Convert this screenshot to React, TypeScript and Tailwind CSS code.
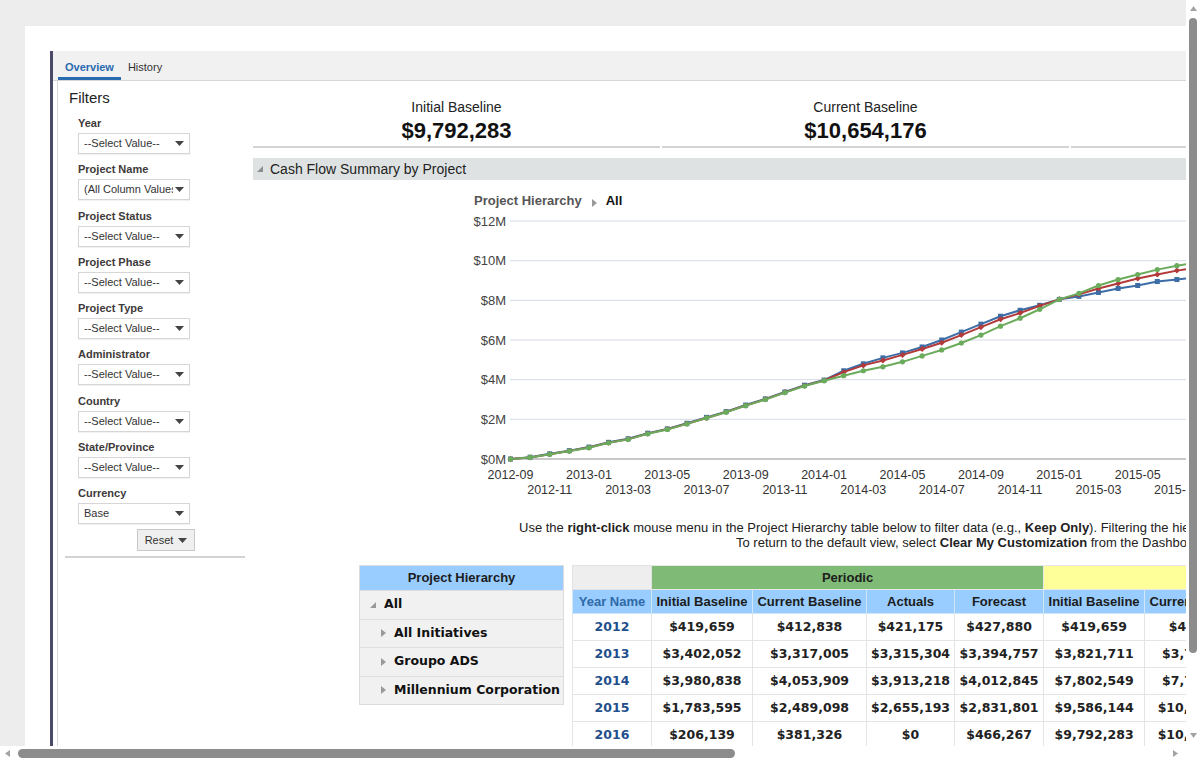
import React from "react";

const filters = [
  { label: "Year", value: "--Select Value--" },
  { label: "Project Name", value: "(All Column Values)" },
  { label: "Project Status", value: "--Select Value--" },
  { label: "Project Phase", value: "--Select Value--" },
  { label: "Project Type", value: "--Select Value--" },
  { label: "Administrator", value: "--Select Value--" },
  { label: "Country", value: "--Select Value--" },
  { label: "State/Province", value: "--Select Value--" },
  { label: "Currency", value: "Base" },
];

// cumulative cash flow in $M, one point per month from 2012-09
const series = [
  {
    color: "#3c6da6",
    marker: "square",
    values: [0, 0.09, 0.26, 0.42, 0.6, 0.84, 1.02, 1.3, 1.52, 1.8, 2.1, 2.39, 2.72, 3.03, 3.38, 3.72, 3.98, 4.45, 4.8, 5.1, 5.35, 5.65, 6.0, 6.4, 6.8, 7.2, 7.5, 7.75, 8.05, 8.2, 8.4, 8.6, 8.75, 8.95, 9.05, 9.15],
  },
  {
    color: "#b33a3a",
    marker: "diamond",
    values: [0, 0.08, 0.24, 0.4, 0.58, 0.82, 1.0, 1.28, 1.5, 1.78, 2.07, 2.37, 2.7, 3.01, 3.36, 3.7, 3.96, 4.38, 4.72, 4.97, 5.25, 5.55, 5.86, 6.25, 6.65, 7.05, 7.36, 7.72, 8.05, 8.3, 8.6, 8.85, 9.1, 9.3, 9.5, 9.65],
  },
  {
    color: "#6bab5c",
    marker: "circle",
    values: [0, 0.08, 0.24, 0.4, 0.57, 0.82, 0.99, 1.27, 1.49, 1.77, 2.07, 2.36, 2.69, 3.0, 3.35, 3.68, 3.95, 4.2, 4.45, 4.65, 4.9, 5.2, 5.5, 5.85, 6.25, 6.7, 7.1, 7.55, 8.05, 8.35, 8.75, 9.05, 9.3, 9.55, 9.75, 9.9],
  },
];

const rows = [
  { year: "2012", cells: ["$419,659", "$412,838", "$421,175", "$427,880", "$419,659", "$412,838", "$421,175", "$427,880"] },
  { year: "2013", cells: ["$3,402,052", "$3,317,005", "$3,315,304", "$3,394,757", "$3,821,711", "$3,729,843", "$3,736,479", "$3,822,637"] },
  { year: "2014", cells: ["$3,980,838", "$4,053,909", "$3,913,218", "$4,012,845", "$7,802,549", "$7,783,752", "$7,649,697", "$7,835,482"] },
  { year: "2015", cells: ["$1,783,595", "$2,489,098", "$2,655,193", "$2,831,801", "$9,586,144", "$10,272,850", "$10,304,890", "$10,667,283"] },
  { year: "2016", cells: ["$206,139", "$381,326", "$0", "$466,267", "$9,792,283", "$10,654,176", "$10,304,890", "$11,133,550"] },
];

const colWidths = [79, 101, 114, 88, 89, 101, 114, 88, 89];

const X0 = 257.5;
const STEP = 19.6;
const Y0 = 250;
const PER_M = 19.83;

function monthLabel(i: number) {
  const m = 8 + i;
  const year = 2012 + Math.floor(m / 12);
  const mon = (m % 12) + 1;
  return `${year}-${mon < 10 ? "0" + mon : mon}`;
}

function Arrow({ className = "" }: { className?: string }) {
  return (
    <svg width="9" height="5" viewBox="0 0 9 5" className={className}>
      <polygon points="0,0 9,0 4.5,5" fill="#444" />
    </svg>
  );
}

function SelectBox({ value }: { value: string }) {
  return (
    <div className="mt-[3px] w-[112px] h-[21px] border border-[#d6d6d6] bg-white shadow-[0_1px_1px_rgba(0,0,0,0.05)] flex items-center pl-[5px] pr-[5px] gap-[2px]">
      <span className="flex-1 overflow-hidden whitespace-nowrap text-[11px] text-[#333] leading-[13px]">
        {value}
      </span>
      <Arrow className="shrink-0" />
    </div>
  );
}

function CashFlowChart() {
  const ticks = [0, 2, 4, 6, 8, 10, 12];
  return (
    <svg width="1000" height="292" className="block font-['Liberation_Sans',Arial,sans-serif]">
      {ticks.map((t) => {
        const y = Y0 - t * PER_M;
        return (
          <g key={t}>
            <line
              x1="257"
              x2="1000"
              y1={y}
              y2={y}
              stroke={t === 0 ? "#c9c9c9" : "#d5dae3"}
              strokeWidth={t === 0 ? 2 : 1}
            />
            <text x="253" y={y + 4.5} textAnchor="end" fontSize="13" fill="#444">
              ${t}M
            </text>
          </g>
        );
      })}

      {Array.from({ length: 9 }, (_, k) => {
        const i = k * 4;
        return (
          <g key={i}>
            <text x={X0 + i * STEP} y="269.5" textAnchor="middle" fontSize="12.5" fill="#333">
              {monthLabel(i)}
            </text>
            <text x={X0 + (i + 2) * STEP} y="284.5" textAnchor="middle" fontSize="12.5" fill="#333">
              {monthLabel(i + 2)}
            </text>
          </g>
        );
      })}

      {series.map((s) => {
        const pts = s.values.map((v, i) => [X0 + i * STEP, Y0 - v * PER_M]);
        return (
          <g key={s.color}>
            <polyline
              points={pts.map((p) => p.join(",")).join(" ")}
              fill="none"
              stroke={s.color}
              strokeWidth="2"
            />
            {pts.map(([x, y], i) =>
              s.marker === "square" ? (
                <rect key={i} x={x - 2.5} y={y - 2.5} width="5" height="5" fill={s.color} />
              ) : s.marker === "diamond" ? (
                <polygon
                  key={i}
                  points={`${x},${y - 3} ${x + 3},${y} ${x},${y + 3} ${x - 3},${y}`}
                  fill={s.color}
                />
              ) : (
                <circle key={i} cx={x} cy={y} r="2.6" fill={s.color} />
              )
            )}
          </g>
        );
      })}
    </svg>
  );
}

function HierarchyTable() {
  const children = ["All Initiatives", "Groupo ADS", "Millennium Corporation"];
  return (
    <div className="w-[205px] shrink-0 border border-[#dcdcdc] bg-[#f1f1f1]">
      <div className="h-[24px] bg-[#99ccff] text-center text-[13px] font-bold leading-[24px] text-[#1c1c1c]">
        Project Hierarchy
      </div>
      <div className="h-[28.5px] border-t border-[#dedede] flex items-center pl-[10px] gap-[8px]">
        <svg width="6" height="6" viewBox="0 0 6 6">
          <polygon points="6,0 6,6 0,6" fill="#999" />
        </svg>
        <span className="font-['DejaVu_Sans',sans-serif] text-[12.5px] font-bold text-[#111]">All</span>
      </div>
      {children.map((c) => (
        <div key={c} className="h-[28.5px] border-t border-[#dedede] flex items-center pl-[21px] gap-[8px]">
          <svg width="5" height="8" viewBox="0 0 5 8">
            <polygon points="0,0 5,4 0,8" fill="#9a9a9a" />
          </svg>
          <span className="font-['DejaVu_Sans',sans-serif] text-[12.5px] font-bold text-[#111] whitespace-nowrap">
            {c}
          </span>
        </div>
      ))}
    </div>
  );
}

function SummaryTable() {
  const heads = ["Initial Baseline", "Current Baseline", "Actuals", "Forecast"];
  return (
    <table className="table-fixed border-collapse w-[863px] shrink-0">
      <colgroup>
        {colWidths.map((w, i) => (
          <col key={i} style={{ width: w }} />
        ))}
      </colgroup>
      <thead>
        <tr className="h-[24px] text-[13px] font-bold">
          <th className="bg-[#eeeeee] border border-[#e2e2e2]"></th>
          <th colSpan={4} className="bg-[#7fba77] border border-[#e8e8e8] text-[#1c1c1c]">
            Periodic
          </th>
          <th colSpan={4} className="bg-[#ffff99] border border-[#e8e8e8] text-[#1c1c1c]">
            Cumulative
          </th>
        </tr>
        <tr className="h-[24px] text-[13px] font-bold bg-[#99ccff]">
          <th className="border border-[#d2e6fa] text-[#2f69a7] whitespace-nowrap">Year Name</th>
          {[...heads, ...heads].map((h, i) => (
            <th key={i} className="border border-[#d2e6fa] text-[#1c1c1c] whitespace-nowrap overflow-hidden">
              {h}
            </th>
          ))}
        </tr>
      </thead>
      <tbody className="font-['DejaVu_Sans',sans-serif] text-[12.5px] font-bold">
        {rows.map((r) => (
          <tr key={r.year} className="h-[27px]">
            <td className="border border-[#e4e4e4] text-center text-[#1f4f8c]">{r.year}</td>
            {r.cells.map((c, i) => (
              <td key={i} className="border border-[#e4e4e4] text-center text-[#222] whitespace-nowrap overflow-hidden">
                {c}
              </td>
            ))}
          </tr>
        ))}
      </tbody>
    </table>
  );
}

export default function App() {
  return (
    <div className="w-[1200px] h-[760px] flex flex-col overflow-hidden bg-white font-['Liberation_Sans',Arial,sans-serif] text-[#222]">
      <div className="flex flex-1 min-h-0">
        {/* page viewport */}
        <div className="flex-1 min-w-0 overflow-hidden bg-[#ededed] pt-[26px] pl-[25px]">
          <div className="w-[1400px] h-[760px] bg-white pt-[25px] pl-[25px]">
            <div className="h-full border-l-[3px] border-[#4a4a68] flex flex-col">
              {/* tabs */}
              <div className="h-[30px] bg-[#f1f1f1] border-b border-[#d6d6d6] flex pl-[5px]">
                <div className="h-full pt-[6px] px-[7px] border-b-[3px] border-[#2a6ab0] flex items-center text-[11px] font-bold text-[#2a6ab0]">
                  Overview
                </div>
                <div className="h-full pt-[6px] px-[7px] border-b-[3px] border-transparent flex items-center text-[11px] text-[#333]">
                  History
                </div>
              </div>

              <div className="flex flex-1 min-h-0">
                {/* filters */}
                <div className="ml-[4px] w-[188px] border-l border-[#d8d8d8] pt-[8px] pl-[11px] shrink-0">
                  <div className="text-[15px] leading-[18px] text-[#222]">Filters</div>
                  <div className="mt-[10px] pl-[9px] flex flex-col gap-[9.25px]">
                    {filters.map((f) => (
                      <div key={f.label}>
                        <div className="text-[11px] font-bold leading-[13px] text-[#3e3a3a]">{f.label}</div>
                        <SelectBox value={f.value} />
                      </div>
                    ))}
                  </div>
                  <button
                    type="button"
                    className="mt-[5px] ml-[68px] w-[58px] h-[22px] border border-[#c9c9c9] bg-[#efefef] flex items-center justify-center gap-[5px] text-[11px] text-[#333]"
                  >
                    Reset
                    <Arrow />
                  </button>
                  <div className="mt-[5px] ml-[-4px] w-[180px] h-[2px] bg-[#d3d3d3]" />
                </div>

                {/* main content */}
                <div className="ml-[8px] flex-1 min-w-0">
                  <div className="pt-[18px] flex gap-[2px]">
                    {[
                      ["Initial Baseline", "$9,792,283"],
                      ["Current Baseline", "$10,654,176"],
                      ["", ""],
                    ].map(([label, value], i) => (
                      <div key={i} className="w-[407px] shrink-0 text-center border-b-2 border-[#d4d4d4] pb-[3px]">
                        <div className="text-[14px] leading-[16px] h-[16px] text-[#222]">{label}</div>
                        <div className="mt-[3px] text-[22px] leading-[25px] h-[25px] font-bold text-[#111]">{value}</div>
                      </div>
                    ))}
                  </div>

                  <div className="mt-[10px] h-[22px] bg-[#dfe2e3] flex items-center pl-[4px] gap-[7px]">
                    <svg width="6" height="6" viewBox="0 0 6 6">
                      <polygon points="6,0 6,6 0,6" fill="#8c8c8c" />
                    </svg>
                    <span className="text-[14px] text-[#222]">Cash Flow Summary by Project</span>
                  </div>

                  <div className="mt-[13px] h-[16px] ml-[221px] flex items-center">
                    <span className="text-[13px] font-bold text-[#555]">Project Hierarchy</span>
                    <svg width="5" height="8" viewBox="0 0 5 8" className="ml-[10px] mt-[4px]">
                      <polygon points="0,0 5,4 0,8" fill="#999" />
                    </svg>
                    <span className="ml-[9px] text-[13px] font-bold text-[#111]">All</span>
                  </div>

                  <CashFlowChart />

                  <div className="mt-[19px] text-[13px] leading-[15px] text-[#222] whitespace-nowrap">
                    <div className="ml-[266px]">
                      Use the <b>right-click</b> mouse menu in the Project Hierarchy table below to filter data (e.g.,{" "}
                      <b>Keep Only</b>). Filtering the hierarchy will update the chart above.
                    </div>
                    <div className="ml-[483px]">
                      To return to the default view, select <b>Clear My Customization</b> from the Dashboard Page Options menu.
                    </div>
                  </div>

                  <div className="mt-[15px] ml-[106px] flex items-start gap-[8px]">
                    <HierarchyTable />
                    <SummaryTable />
                  </div>
                </div>
              </div>
            </div>
          </div>
        </div>

        {/* vertical scrollbar */}
        <div className="w-[14px] shrink-0 bg-white flex flex-col items-center pt-[6px] pb-[8px]">
          <svg width="7" height="5" viewBox="0 0 7 5">
            <polygon points="0,5 3.5,0 7,5" fill="#a3a3a3" />
          </svg>
          <div className="mt-[7px] w-[8px] h-[635px] rounded-full bg-[#8c8c8c]" />
          <div className="flex-1" />
          <svg width="7" height="5" viewBox="0 0 7 5">
            <polygon points="0,0 7,0 3.5,5" fill="#a3a3a3" />
          </svg>
        </div>
      </div>

      {/* horizontal scrollbar */}
      <div className="h-[14px] shrink-0 flex items-center bg-white">
        <div className="flex-1 flex items-center pl-[5px] pr-[8px]">
          <svg width="5" height="7" viewBox="0 0 5 7">
            <polygon points="5,0 0,3.5 5,7" fill="#a3a3a3" />
          </svg>
          <div className="ml-[8px] w-[717px] h-[9px] rounded-full bg-[#8c8c8c]" />
          <div className="flex-1" />
          <svg width="5" height="7" viewBox="0 0 5 7">
            <polygon points="0,0 5,3.5 0,7" fill="#a3a3a3" />
          </svg>
        </div>
        <div className="w-[14px]" />
      </div>
    </div>
  );
}
